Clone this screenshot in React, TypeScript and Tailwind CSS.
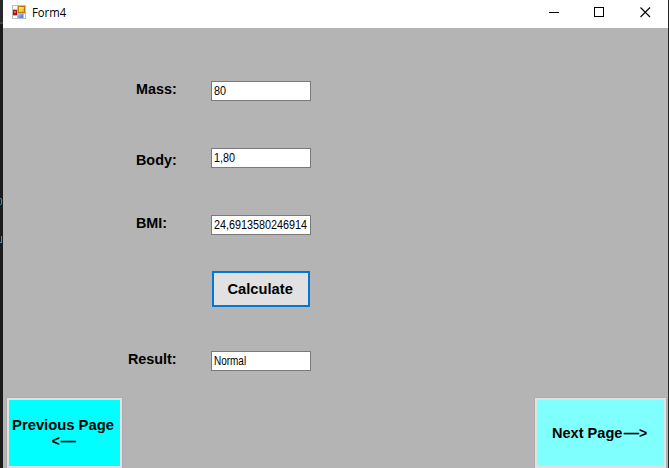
import type { ReactNode } from "react";

function Field({ label, value, className, labelClass, valueClass = "scale-x-[0.9]" }: { label: string; value: string; className: string; labelClass: string; valueClass?: string }) {
  return (
    <div className={`flex h-5 items-start ${className}`}>
      <label className={`shrink-0 whitespace-nowrap text-[14px] leading-4 font-bold ${labelClass}`}>
        <span className="inline-block origin-left scale-x-[1.025] align-top">{label}</span>
      </label>
      <div className="h-5 w-[100px] shrink-0 border border-[#7a7a7a] bg-white pl-0.5">
        <span className={`inline-block origin-left align-top text-[12px] leading-[18px] whitespace-nowrap ${valueClass}`}>{value}</span>
      </div>
    </div>
  );
}

function PageButton({ className, children }: { className: string; children: ReactNode }) {
  return (
    <button className={`h-[70px] border-2 border-[#e1e1e1] text-[14px] leading-4 font-bold whitespace-nowrap outline outline-[#adadad] ${className}`}>
      {children}
    </button>
  );
}

function Dashes() {
  return <span className="inline-block origin-left scale-x-[1.45] font-normal tracking-[-1.2px] [-webkit-text-stroke:0.3px_black]">---</span>;
}

function FormIcon() {
  return (
    <svg width="14" height="14" viewBox="0 0 14 14" className="mt-[5px] ml-[9px] shrink-0" shapeRendering="crispEdges">
      <defs>
        <linearGradient id="gold" x2="1" y2="1">
          <stop stopColor="#fff0a0" />
          <stop offset="1" stopColor="#efa800" />
        </linearGradient>
        <linearGradient id="blue" x2="1" y2="1">
          <stop stopColor="#a8c8ff" />
          <stop offset="1" stopColor="#3972dc" />
        </linearGradient>
      </defs>
      <path d="M0 0h14v14H0z" fill="#bcbcbc" />
      <path d="M1 1h4v3H1zM1 11h4v2H1zM12 9h1v4h-1z" fill="#fff" />
      <path d="M6 1h7v7H6z" fill="#b77d05" />
      <path d="M7 2h5v5H7z" fill="url(#gold)" />
      <path d="M1 5h4v5H1z" fill="#a51814" />
      <path d="M2 6h2v2H2z" fill="#e76650" />
      <path d="M6 9h5v4H6z" fill="url(#blue)" />
    </svg>
  );
}

export default function App() {
  return (
    <div className="flex h-[468px] w-[669px] overflow-hidden bg-[#b4b4b4] font-['Liberation_Sans',Arial,sans-serif] text-black">
      <div className="flex w-[3px] shrink-0 flex-col bg-[#1b1b1c]">
        <div className="h-[22px] bg-[#29292b]" />
        <div className="h-[2px] bg-[#454547]" />
        <div className="mt-[174px] h-[7px] w-[2px] rounded-r-sm border border-l-0 border-[#3f8fc4]" />
        <div className="mt-[31px] h-[7px] w-[2px] border-r border-b border-[#3f8fc4]" />
      </div>
      <main className="flex w-[665px] shrink-0 flex-col">
        <header className="flex h-7 shrink-0 items-start bg-white">
          <FormIcon />
          <span className="mt-[5px] ml-[6px] origin-left scale-x-[0.94] font-['Open_Sans','Noto_Sans',sans-serif] text-[12px] leading-4">Form4</span>
          <svg width="104" height="12" viewBox="0 0 104 12" className="mt-[6px] mr-[16px] ml-auto" fill="none" stroke="#000">
            <path d="M1 6.5h10M46.5 1.5h9v9h-9z" shapeRendering="crispEdges" />
            <path d="M92.5 1.5l9.5 9.5M102 1.5L92.5 11" strokeWidth="1.1" />
          </svg>
        </header>
        <Field label="Mass:" value="80" className="mt-[53px] pl-[133px]" labelClass="w-[75px]" />
        <Field label="Body:" value="1,80" className="mt-[47px] pl-[133px]" labelClass="w-[75px] pt-1" />
        <Field label="BMI:" value="24,6913580246914" className="mt-[47px] pl-[133px]" labelClass="w-[75px]" />
        <button className="mt-9 ml-[209px] h-9 w-[98px] shrink-0 border-2 border-[#0078d7] bg-[#e1e1e1] pr-[2px] text-[14px] font-bold">
          <span className="inline-block scale-x-[1.05]">Calculate</span>
        </button>
        <Field label="Result:" value="Normal" className="mt-11 pl-[125px]" labelClass="w-[83px]" valueClass="scale-x-[0.83]" />
        <footer className="mt-[27px] flex shrink-0 justify-between pr-[2px] pl-1">
          <PageButton className="w-[115px] bg-[#00ffff] pr-[3px]">
            <span className="block scale-x-[1.055]">Previous Page</span>
            <span className="block pr-1">&lt;<Dashes /></span>
          </PageButton>
          <PageButton className="w-[131px] bg-[#80ffff]">
            <span className="flex items-center pl-[15px]">
              <span className="mr-[3px] origin-left scale-x-[1.04]">Next Page</span>
              <Dashes />
              <span className="ml-[6px]">&gt;</span>
            </span>
          </PageButton>
        </footer>
      </main>
      <div className="w-px shrink-0 bg-[#252526]" />
    </div>
  );
}
